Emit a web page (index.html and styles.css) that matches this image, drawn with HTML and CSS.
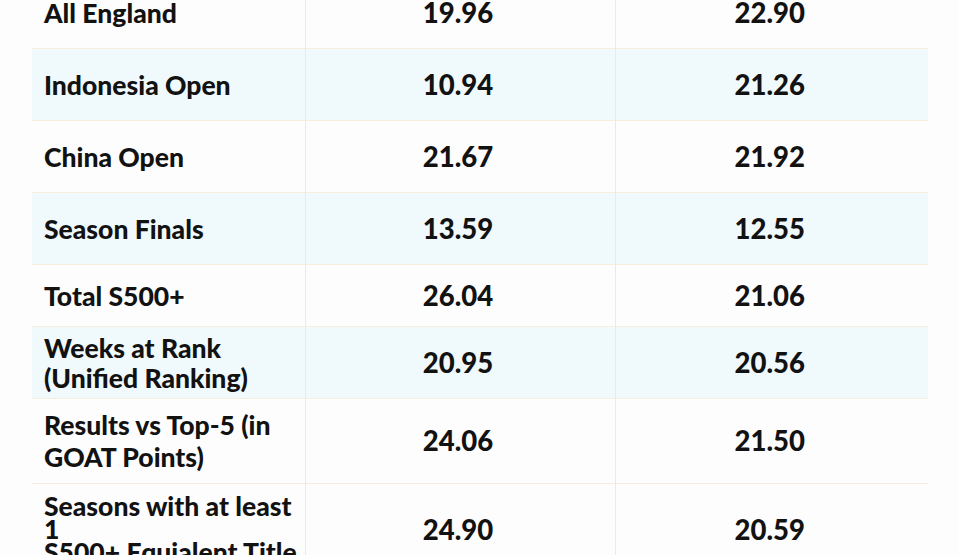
FILE: index.html
```html
<!DOCTYPE html>
<html>
<head>
<meta charset="utf-8">
<link rel="stylesheet" href="styles.css">
</head>
<body>
<table class="stats">
  <colgroup>
    <col class="c-name">
    <col class="c-val">
    <col class="c-val2">
  </colgroup>
  <tbody>
    <tr class="r-first"><td class="name">All England</td><td>19.96</td><td>22.90</td></tr>
    <tr class="alt"><td class="name">Indonesia Open</td><td>10.94</td><td>21.26</td></tr>
    <tr><td class="name">China Open</td><td>21.67</td><td>21.92</td></tr>
    <tr class="alt"><td class="name">Season Finals</td><td>13.59</td><td>12.55</td></tr>
    <tr class="r-short"><td class="name">Total S500+</td><td>26.04</td><td>21.06</td></tr>
    <tr class="alt r-two"><td class="name">Weeks at Rank (Unified Ranking)</td><td>20.95</td><td>20.56</td></tr>
    <tr class="r-two2"><td class="name">Results vs Top-5 (in GOAT Points)</td><td>24.06</td><td>21.50</td></tr>
    <tr class="r-last"><td class="name">Seasons with at least<br>1<br>S500+ Equialent Title</td><td>24.90</td><td>20.59</td></tr>
  </tbody>
</table>
</body>
</html>
```
FILE: styles.css
```css
html, body {
  margin: 0;
  padding: 0;
  background: #fdfdfd;
  overflow: hidden;
}
body {
  font-family: "Lato", "Liberation Sans", sans-serif;
  font-weight: 900;
  color: #121212;
}
.stats {
  margin: -24px 0 0 32px;
  width: 896px;
  border-collapse: collapse;
  table-layout: fixed;
  font-size: 27.5px;
  line-height: 30px;
}
.c-name { width: 273px; }
.c-val { width: 310px; }
.c-val2 { width: 313px; }
.stats td {
  height: 72px;
  padding: 0 12px 0 8px;
  vertical-align: middle;
  text-align: center;
  border-left: 1px solid #f5e9d2;
  border-top: 1px solid #f7eedd;
  box-sizing: border-box;
  white-space: nowrap;
}
.stats td:first-child { border-left: none; }
.stats td.name {
  text-align: left;
  white-space: normal;
  font-size: 26.5px;
  padding: 0 4px 0 12px;
}
.stats tr.alt td { background: #f0f9fc; }
.stats tr.r-short td { height: 62px; }
.stats tr.r-two td { height: 72px; }
.stats tr.r-two2 td { height: 85px; line-height: 32px; }
.stats tr.r-last td { height: 92px; line-height: 23px; }
```
